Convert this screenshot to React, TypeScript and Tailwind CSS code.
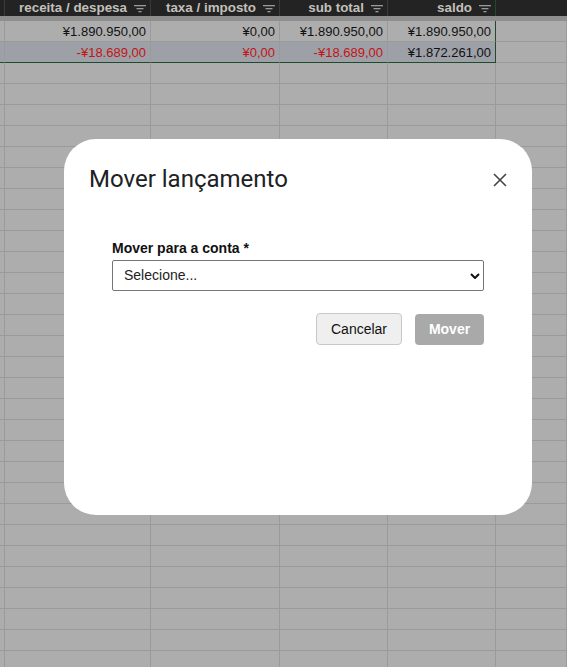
import React from "react";

const cols = [5, 146, 129, 108, 108, 71];
const headers = ["", "receita / despesa", "taxa / imposto", "sub total", "saldo", ""];

type Cell = { text: string; red?: boolean };
const dataRows: Cell[][] = [
  [
    { text: "" },
    { text: "¥1.890.950,00" },
    { text: "¥0,00" },
    { text: "¥1.890.950,00" },
    { text: "¥1.890.950,00" },
    { text: "" },
  ],
  [
    { text: "" },
    { text: "-¥18.689,00", red: true },
    { text: "¥0,00", red: true },
    { text: "-¥18.689,00", red: true },
    { text: "¥1.872.261,00" },
    { text: "" },
  ],
];

function FilterIcon() {
  return (
    <svg width="12" height="9" viewBox="0 0 12 9" className="shrink-0">
      <rect x="0" y="1" width="12" height="1.3" fill="#9a9a9a" />
      <rect x="2.5" y="4" width="7" height="1.3" fill="#9a9a9a" />
      <rect x="4.5" y="7" width="3" height="1.3" fill="#9a9a9a" />
    </svg>
  );
}

export default function App() {
  const emptyRows = Array.from({ length: 30 });
  return (
    <div
      className="relative w-[567px] h-[667px] overflow-hidden bg-[#adadad]"
      style={{ fontFamily: '"Liberation Sans", Arial, sans-serif' }}
    >
      {/* header */}
      <div className="flex h-[16px] bg-[#232323]">
        {cols.map((w, i) => (
          <div
            key={i}
            style={{ width: w }}
            className={`shrink-0 h-full flex items-center justify-end gap-[7px] pr-[4px] ${
              i === 4 ? "border-r border-[#1f4a2c]" : i < 4 ? "border-r border-[#3a3a3a]" : ""
            }`}
          >
            {headers[i] && (
              <>
                <span className="text-[13.4px] font-bold leading-none text-[#c2c0bb] whitespace-nowrap">
                  {headers[i]}
                </span>
                <FilterIcon />
              </>
            )}
          </div>
        ))}
      </div>
      <div className="h-[5px] bg-[#8e8e8e]" />
      {/* data rows */}
      {dataRows.map((row, r) => (
        <div
          key={r}
          className={`flex h-[21px] ${r === 1 ? "bg-[#9da0a7]" : ""}`}
        >
          {cols.map((w, i) => (
            <div
              key={i}
              style={{ width: w }}
              className={`shrink-0 h-full flex items-center justify-end pr-[4px] border-r ${
                i === 4 ? "border-[#1f4a2c]" : "border-[#9a9a9a]"
              } ${
                r === 1
                  ? i < 5
                    ? "border-b border-b-[#1f4a2c]"
                    : "border-b border-b-[#9a9a9a] bg-[#adadad]"
                  : "border-b border-b-[#9a9a9a]"
              }`}
            >
              <span
                className={`text-[13px] leading-none whitespace-nowrap ${
                  row[i].red ? "text-[#c41414]" : "text-[#111]"
                }`}
              >
                {row[i].text}
              </span>
            </div>
          ))}
        </div>
      ))}
      {emptyRows.map((_, r) => (
        <div key={r} className="flex h-[21px]">
          {cols.map((w, i) => (
            <div
              key={i}
              style={{ width: w }}
              className="shrink-0 h-full border-r border-b border-[#9a9a9a]"
            />
          ))}
        </div>
      ))}

      {/* modal overlay */}
      <div className="absolute inset-0 pl-[64px] pt-[139px]">
        <div className="w-[468px] h-[376px] bg-white rounded-[32px] pt-[24px]">
          <div className="flex items-center justify-between pl-[25px] pr-[24px] h-[32px]">
            <h2
              className="text-[24px] leading-[32px] text-[#202124] font-normal"
              style={{ fontFamily: 'Roboto, "Open Sans", sans-serif' }}
            >
              Mover lançamento
            </h2>
            <svg width="16" height="16" viewBox="0 0 16 16" className="mt-[2px]">
              <path d="M2 2 L14 14 M14 2 L2 14" stroke="#444" strokeWidth="1.6" />
            </svg>
          </div>
          <div className="px-[48px] pt-[45px]">
            <label className="block text-[14px] font-bold leading-[16px] text-[#111]">
              Mover para a conta *
            </label>
            <div className="mt-[4px] h-[31px] border border-[#767676] rounded-[2px] flex items-center justify-between pl-[11px] pr-[3px]">
              <span className="text-[14px] text-[#222]">Selecione...</span>
              <svg width="10" height="6" viewBox="0 0 10 6">
                <path d="M1 1 L5 5 L9 1" stroke="#111" strokeWidth="2" fill="none" />
              </svg>
            </div>
            <div className="flex justify-end gap-[13px] mt-[22px]">
              <button className="w-[86px] h-[32px] bg-[#efefef] border border-[#c8c8c8] rounded-[4px] text-[14px] text-[#111]">
                Cancelar
              </button>
              <button className="w-[69px] h-[31px] mt-[1px] bg-[#a9a9a9] rounded-[4px] text-[14px] font-bold text-white">
                Mover
              </button>
            </div>
          </div>
        </div>
      </div>
    </div>
  );
}
